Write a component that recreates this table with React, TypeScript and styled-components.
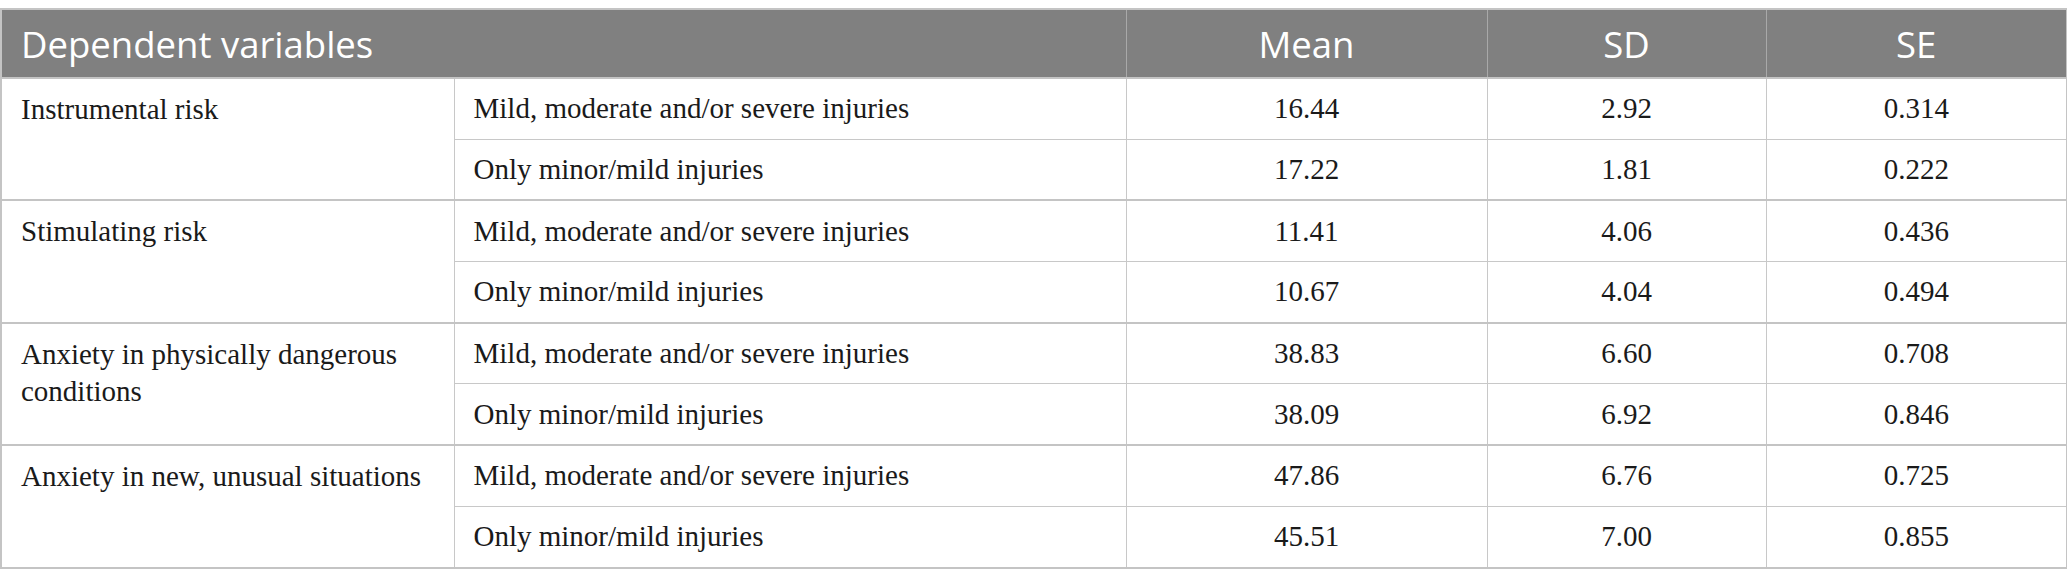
import React from 'react';
import styled, { createGlobalStyle } from 'styled-components';

const GlobalStyle = createGlobalStyle`
  html, body {
    margin: 0;
    padding: 0;
    background: #ffffff;
  }
`

type Row = { label: string; mean: string; sd: string; se: string }
type Group = { name: string; rows: Row[] }

const groups: Group[] = [
  {
    name: 'Instrumental risk',
    rows: [
      { label: 'Mild, moderate and/or severe injuries', mean: '16.44', sd: '2.92', se: '0.314' },
      { label: 'Only minor/mild injuries', mean: '17.22', sd: '1.81', se: '0.222' },
    ],
  },
  {
    name: 'Stimulating risk',
    rows: [
      { label: 'Mild, moderate and/or severe injuries', mean: '11.41', sd: '4.06', se: '0.436' },
      { label: 'Only minor/mild injuries', mean: '10.67', sd: '4.04', se: '0.494' },
    ],
  },
  {
    name: 'Anxiety in physically dangerous conditions',
    rows: [
      { label: 'Mild, moderate and/or severe injuries', mean: '38.83', sd: '6.60', se: '0.708' },
      { label: 'Only minor/mild injuries', mean: '38.09', sd: '6.92', se: '0.846' },
    ],
  },
  {
    name: 'Anxiety in new, unusual situations',
    rows: [
      { label: 'Mild, moderate and/or severe injuries', mean: '47.86', sd: '6.76', se: '0.725' },
      { label: 'Only minor/mild injuries', mean: '45.51', sd: '7.00', se: '0.855' },
    ],
  },
]

function App() {
  return (
    <Page>
      <GlobalStyle />
      <Table>
        <colgroup>
          <col style={{ width: 453 }} />
          <col style={{ width: 672 }} />
          <col style={{ width: 361 }} />
          <col style={{ width: 279 }} />
          <col style={{ width: 301 }} />
        </colgroup>
        <thead>
          <tr>
            <HeadCell colSpan={2}>Dependent variables</HeadCell>
            <HeadCell $center>Mean</HeadCell>
            <HeadCell $center>SD</HeadCell>
            <HeadCell $center>SE</HeadCell>
          </tr>
        </thead>
        {groups.map((g) => (
          <Group key={g.name}>
            {g.rows.map((r, i) => (
              <BodyRow key={r.label}>
                {i === 0 && <NameCell rowSpan={g.rows.length}>{g.name}</NameCell>}
                <Cell>{r.label}</Cell>
                <Cell $center>{r.mean}</Cell>
                <Cell $center>{r.sd}</Cell>
                <Cell $center>{r.se}</Cell>
              </BodyRow>
            ))}
          </Group>
        ))}
      </Table>
    </Page>
  );
}

export default App;

const Page = styled.div`
  padding-top: 8px;
  width: 2066px;
`
const Table = styled.table`
  width: 2066px;
  table-layout: fixed;
  border-collapse: collapse;
  border: 2px solid #c4c4c4;
`
const HeadCell = styled.th<{ $center?: boolean }>`
  height: 67px;
  padding: 0 19px;
  background: #808080;
  color: #ffffff;
  font-family: 'Open Sans', 'Noto Sans', sans-serif;
  font-weight: 400;
  font-size: 36.5px;
  text-align: ${(p) => (p.$center ? 'center' : 'left')};
  border: 1px solid #a9a9a9;
  border-top: 2px solid #c4c4c4;
`
const Group = styled.tbody`
  border-top: 2px solid #c4c4c4;
`
const BodyRow = styled.tr`
  height: 61.2px;
`
const Cell = styled.td<{ $center?: boolean }>`
  padding: 0 19px;
  font-family: 'Liberation Serif', 'Times New Roman', serif;
  font-size: 29px;
  line-height: 37px;
  color: #1a1a1a;
  text-align: ${(p) => (p.$center ? 'center' : 'left')};
  border: 1px solid #c8c8c8;
  vertical-align: middle;
`
const NameCell = styled(Cell)`
  vertical-align: top;
  padding: 12px 19px 0;
`
